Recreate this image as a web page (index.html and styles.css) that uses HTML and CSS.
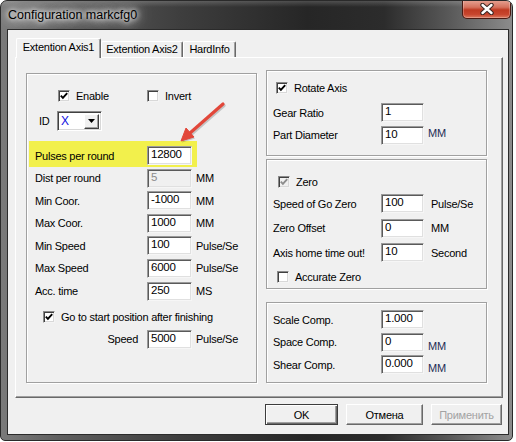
FILE: index.html
```html
<!DOCTYPE html>
<html>
<head>
<meta charset="utf-8">
<link rel="stylesheet" href="styles.css">
</head>
<body>
<div class="window">
  <div class="titlebar">
    <span class="title">Configuration markcfg0</span>
    <div class="close">
      <svg width="16" height="12" viewBox="0 0 16 12"><path d="M3.5 2 L12.5 10 M12.5 2 L3.5 10" stroke="#3b2622" stroke-width="4.4" stroke-linecap="round"/><path d="M3.5 2 L12.5 10 M12.5 2 L3.5 10" stroke="#fff" stroke-width="2.4" stroke-linecap="round"/></svg>
    </div>
  </div>
  <div class="client">
    <div class="tabs">
      <div class="tab active t1">Extention Axis1</div>
      <div class="tab t2">Extention Axis2</div>
      <div class="tab t3">HardInfo</div>
    </div>
    <div class="panel">
      <div class="group leftgroup">
        <div class="opts">
          <label class="chk enable"><span class="box"><svg width="10" height="10" viewBox="0 0 10 10"><path d="M1.8 4.6 L3.9 6.8 L8.2 2.2" fill="none" stroke="#000" stroke-width="1.9"/></svg></span>Enable</label>
          <label class="chk"><span class="box"></span>Invert</label>
        </div>
        <div class="idrow">
          <span class="idlbl">ID</span>
          <div class="combo"><span class="cval">X</span><span class="cbtn"><svg width="7" height="4" viewBox="0 0 7 4"><path d="M0 0 H7 L3.5 4 Z" fill="#000"/></svg></span></div>
        </div>
        <div class="rows">
          <div class="row hl"><span class="lbl">Pulses per round</span><span class="inp">12800</span></div>
          <div class="row"><span class="lbl">Dist per round</span><span class="inp disabled">5</span><span class="unit">MM</span></div>
          <div class="row"><span class="lbl">Min Coor.</span><span class="inp">-1000</span><span class="unit">MM</span></div>
          <div class="row"><span class="lbl">Max Coor.</span><span class="inp">1000</span><span class="unit">MM</span></div>
          <div class="row"><span class="lbl">Min Speed</span><span class="inp">100</span><span class="unit">Pulse/Se</span></div>
          <div class="row"><span class="lbl">Max Speed</span><span class="inp">6000</span><span class="unit">Pulse/Se</span></div>
          <div class="row"><span class="lbl">Acc. time</span><span class="inp">250</span><span class="unit">MS</span></div>
        </div>
        <label class="chk gostart"><span class="box"><svg width="10" height="10" viewBox="0 0 10 10"><path d="M1.8 4.6 L3.9 6.8 L8.2 2.2" fill="none" stroke="#000" stroke-width="1.9"/></svg></span>Go to start position after finishing</label>
        <div class="row speedrow"><span class="lbl right">Speed</span><span class="inp">5000</span><span class="unit">Pulse/Se</span></div>
      </div>
      <div class="rightcol">
        <div class="group g1">
          <label class="chk rot"><span class="box"><svg width="10" height="10" viewBox="0 0 10 10"><path d="M1.8 4.6 L3.9 6.8 L8.2 2.2" fill="none" stroke="#000" stroke-width="1.9"/></svg></span>Rotate Axis</label>
          <div class="rrows r1">
            <div class="row"><span class="rlbl">Gear Ratio</span><span class="inp rinp">1</span></div>
            <div class="row"><span class="rlbl">Part Diameter</span><span class="inp rinp">10</span><span class="unit runit up">MM</span></div>
          </div>
        </div>
        <div class="group g2">
          <label class="chk zero"><span class="box dis"><svg width="10" height="10" viewBox="0 0 10 10"><path d="M1.8 4.6 L3.9 6.8 L8.2 2.2" fill="none" stroke="#8d8d8d" stroke-width="1.9"/></svg></span>Zero</label>
          <div class="rrows r2">
            <div class="row"><span class="rlbl">Speed of Go Zero</span><span class="inp rinp">100</span><span class="unit wide">Pulse/Se</span></div>
            <div class="row"><span class="rlbl">Zero Offset</span><span class="inp rinp">0</span><span class="unit wide">MM</span></div>
            <div class="row"><span class="rlbl">Axis home time out!</span><span class="inp rinp">10</span><span class="unit wide">Second</span></div>
          </div>
          <label class="chk accz"><span class="box"></span>Accurate Zero</label>
        </div>
        <div class="group g3">
          <div class="rrows r3">
            <div class="row"><span class="rlbl">Scale Comp.</span><span class="inp rinp">1.000</span></div>
            <div class="row"><span class="rlbl">Space Comp.</span><span class="inp rinp">0</span><span class="unit runit down">MM</span></div>
            <div class="row"><span class="rlbl">Shear Comp.</span><span class="inp rinp">0.000</span><span class="unit runit down">MM</span></div>
          </div>
        </div>
      </div>
    </div>
    <div class="buttons">
      <div class="btn ok">OK</div>
      <div class="btn cancel">Отмена</div>
      <div class="btn apply">Применить</div>
    </div>
  </div>
  <svg class="arrow" width="60" height="55" viewBox="0 0 60 55">
    <path d="M53 10 L20 39" stroke="rgba(0,0,0,0.18)" stroke-width="3.4" stroke-linecap="round" transform="translate(1,1.5)"/>
    <path d="M11 47 L24 43 L16 34 Z" fill="rgba(0,0,0,0.18)" transform="translate(1,1.5)"/>
    <path d="M53 10 L20 39" stroke="#e2473a" stroke-width="3.2" stroke-linecap="round"/>
    <path d="M11 47 L24 43 L16 34 Z" fill="#e2473a" stroke="#e2473a" stroke-width="1" stroke-linejoin="round"/>
  </svg>
</div>
</body>
</html>
```

FILE: styles.css
```css
body {
  margin: 0;
  background: #ffffff;
  font-family: "Liberation Sans", Arial, sans-serif;
  font-size: 11px;
  letter-spacing: -0.25px;
  color: #000;
}

.window {
  position: relative;
  width: 513px;
  height: 441px;
  box-sizing: border-box;
  border: 1px solid #2a2a2a;
  border-radius: 7px 7px 5px 5px;
  background:
    linear-gradient(to bottom, rgba(255,255,255,0.18) 0px, rgba(255,255,255,0) 6px),
    linear-gradient(to right, #7a7a7a 0%, #5e5e5e 12%, #3e3e3e 35%, #262626 60%, #2c2c2c 75%, #5a5a5a 88%, #8c8c8c 100%);
  display: flex;
  flex-direction: column;
  overflow: hidden;
}

.titlebar {
  height: 28px;
  display: flex;
  align-items: flex-start;
}

.title {
  margin: 7px 0 0 7px;
  font-size: 12.5px;
  letter-spacing: 0;
  line-height: 15px;
  color: #000;
  text-shadow: 0 0 5px #fff, 0 0 9px #fff, 0 0 13px rgba(255,255,255,0.9), 0 0 18px rgba(255,255,255,0.7);
}

.close {
  margin: -1px 1px 0 auto;
  width: 49px;
  height: 19px;
  box-sizing: border-box;
  border: 1px solid #4a1a12;
  border-top: none;
  border-radius: 0 0 5px 5px;
  background: linear-gradient(to bottom, #e7a596 0%, #d5725e 40%, #bf3a22 55%, #c8452d 80%, #db7a60 100%);
  box-shadow: inset 0 0 0 1px rgba(255,255,255,0.25);
  display: flex;
  align-items: center;
  justify-content: center;
}

.client {
  flex: 1;
  margin: 0 3px 5px 6px;
  border: 1px solid #2b2b2b;
  background: #f0f0f0;
  padding: 8px 5px 0 7px;
  display: flex;
  flex-direction: column;
}

.tabs {
  display: flex;
  align-items: flex-end;
  margin-left: 1px;
  height: 19px;
}

.tab {
  box-sizing: border-box;
  height: 16px;
  border-top: 1px solid #fff;
  border-left: 1px solid #fff;
  border-right: 1px solid #696969;
  box-shadow: inset -1px 0 0 #a0a0a0;
  border-radius: 2px 2px 0 0;
  text-align: center;
  line-height: 15px;
  background: #f0f0f0;
}

.tab.active {
  height: 20px;
  margin-bottom: -1px;
  line-height: 17px;
  position: relative;
  z-index: 1;
}

.t1 { width: 85px; }
.t2 { width: 82px; }
.t3 { width: 53px; }

.panel {
  height: 341px;
  box-sizing: border-box;
  border: 1px solid;
  border-color: #fff #696969 #696969 #fff;
  box-shadow: inset -1px -1px 0 #a0a0a0;
  padding: 12px 14px 0 10px;
  display: flex;
  align-items: flex-start;
}

.group {
  box-sizing: border-box;
  border: 1px solid #a0a0a0;
  box-shadow: inset 1px 1px 0 #fff, 1px 1px 0 #fff;
  display: flex;
  flex-direction: column;
  align-items: flex-start;
}

.leftgroup {
  margin-top: 3px;
  width: 231px;
  height: 310px;
}

.rightcol {
  margin-left: 9px;
  width: 221px;
  display: flex;
  flex-direction: column;
}

.g1 { height: 86px; }
.g2 { height: 130px; margin-top: 3px; }
.g3 { height: 81px; margin-top: 13px; }

/* checkboxes */
.chk {
  display: flex;
  align-items: center;
  gap: 6px;
  height: 12px;
  line-height: 12px;
  white-space: nowrap;
}

.box {
  width: 12px;
  height: 12px;
  box-sizing: border-box;
  border: 1px solid;
  border-color: #8a8a8a #f4f4f4 #f4f4f4 #8a8a8a;
  box-shadow: inset 1px 1px 0 #404040, inset -1px -1px 0 #d8d8d8;
  background: #fff;
  display: flex;
  align-items: center;
  justify-content: center;
}

.box.dis {
  background: #f0f0f0;
}

.opts {
  margin: 16px 0 0 31px;
  display: flex;
}

.enable { width: 89px; }

.idrow {
  margin: 9px 0 0 12px;
  display: flex;
  align-items: center;
}

.idlbl { width: 18px; }

.combo {
  width: 45px;
  height: 20px;
  box-sizing: border-box;
  border: 1px solid;
  border-color: #8a8a8a #fff #fff #8a8a8a;
  box-shadow: inset 1px 1px 0 #404040, inset -1px -1px 0 #d8d8d8;
  background: #fff;
  display: flex;
  align-items: center;
  padding: 0 2px 0 2px;
}

.cval {
  flex: 1;
  color: #1010e0;
  font-size: 12px;
  padding-left: 1px;
}

.cbtn {
  width: 15px;
  height: 15px;
  box-sizing: border-box;
  border: 1px solid;
  border-color: #fff #404040 #404040 #fff;
  box-shadow: inset -1px -1px 0 #a0a0a0;
  background: #f0f0f0;
  display: flex;
  align-items: center;
  justify-content: center;
}

/* rows */
.rows {
  margin: 15px 0 0 8px;
  display: flex;
  flex-direction: column;
  align-items: flex-start;
  gap: 3.6px;
}

.row {
  display: flex;
  align-items: center;
  height: 19px;
}

.row.hl {
  margin: -5px -5px -2px -6px;
  padding: 5px 5px 2px 6px;
  background: #f2f04c;
}

.lbl { width: 112px; }
.lbl.right { text-align: right; padding-right: 9px; box-sizing: border-box; }

.inp {
  display: block;
  width: 45px;
  height: 19px;
  box-sizing: border-box;
  border: 1px solid;
  border-color: #9a9a9a #f6f6f6 #f6f6f6 #9a9a9a;
  box-shadow: inset 1px 1px 0 #5a5a5a, inset -1px -1px 0 #e0e0e0;
  background: #fff;
  padding-left: 3px;
  line-height: 15px;
  font-size: 11.5px;
}

.inp.disabled {
  background: #f0f0f0;
  color: #8c8c8c;
}

.unit { margin-left: 4px; white-space: nowrap; }

.gostart { margin: 10px 0 0 16px; }

.speedrow { margin: 7px 0 0 8px; }

/* right groups */
.rot { margin: 11px 0 0 9px; }
.zero { margin: 16px 0 0 11px; }
.accz { margin: 9px 0 0 10px; }

.rrows {
  margin-left: 6px;
  display: flex;
  flex-direction: column;
  gap: 3.7px;
}

.r1 { margin-top: 9px; }
.r2 { margin-top: 6px; gap: 5.5px; }
.r3 { margin-top: 7px; }

.rlbl { width: 108px; white-space: nowrap; }

.rinp { width: 43px; }

.unit.wide { margin-left: 7px; }

.runit { color: #1d2c55; }
.up { align-self: flex-start; line-height: 14px; }
.down { align-self: flex-end; line-height: 12px; }

/* buttons */
.buttons {
  margin-top: 6px;
  display: flex;
  justify-content: flex-end;
  gap: 8px;
  padding-right: 1px;
}

.btn {
  height: 21px;
  box-sizing: border-box;
  border: 1px solid;
  border-color: #fff #696969 #696969 #fff;
  box-shadow: inset -1px -1px 0 #a0a0a0;
  background: #f0f0f0;
  display: flex;
  align-items: center;
  justify-content: center;
}

.btn.ok {
  width: 73px;
  border-color: #3c3c3c;
  box-shadow: inset 1px 1px 0 #fff, inset -1px -1px 0 #696969, inset -2px -2px 0 #a0a0a0;
}

.btn.cancel { width: 77px; }

.btn.apply { width: 71px; color: #a3a3a3; }

.arrow {
  position: absolute;
  left: 169px;
  top: 93px;
}
```
